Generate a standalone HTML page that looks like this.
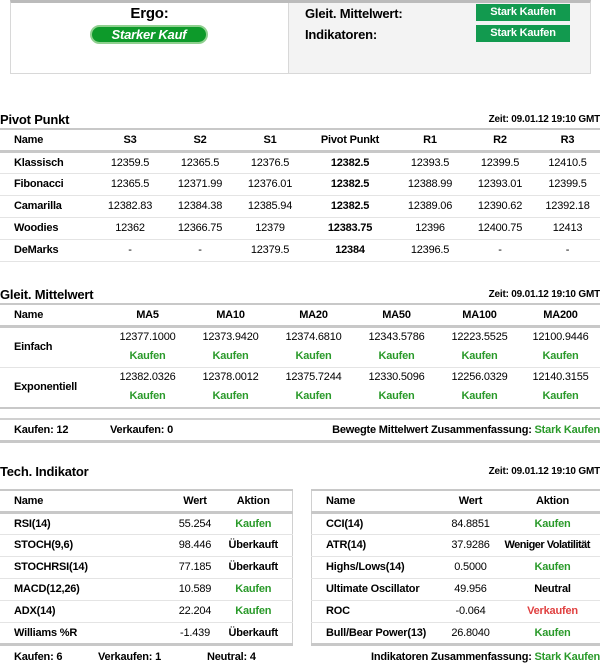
<!DOCTYPE html>
<html><head><meta charset="utf-8"><style>
*{margin:0;padding:0;box-sizing:border-box}
body{width:600px;height:666px;overflow:hidden;background:#fff;font-family:"Liberation Sans",Arial,sans-serif;font-size:11px;color:#000;position:relative;letter-spacing:-0.2px}
.abs{position:absolute}
.top{left:10px;top:0;width:581px;height:74px;border:1px solid #d8d8d8;border-top:3px solid #bbb;background:#fff}
.topr{position:absolute;left:277px;top:0;right:0;bottom:0;background:#f3f3f3;border-left:1px solid #d8d8d8}
.btn{position:absolute;background:#129a4f;color:#fff;font-weight:bold;font-size:11px;text-align:center;width:94px;height:17px;line-height:17px}
.pill{position:absolute;width:118px;height:19px;border-radius:10px;background:#0d9a2a;border:2px solid #8fd08f;color:#fff;font-style:italic;font-weight:bold;font-size:13px;text-align:center;line-height:15px}
.title{position:absolute;left:0;font-weight:bold;font-size:13px}
.time{position:absolute;right:0;font-weight:bold;font-size:10px}
table{position:absolute;border-collapse:collapse;table-layout:fixed}
td{height:22px;text-align:center;border-bottom:1px solid #e4e4e4;white-space:nowrap}
tr.h td{font-weight:bold;border-top:2px solid #c8c8c8;border-bottom:3px solid #c8c8c8}
td.n{text-align:left;padding-left:14px;font-weight:bold}
.g{color:#2a9a2a;font-weight:bold}
.r{color:#e04040;font-weight:bold}
b{font-weight:bold}
.ma td{line-height:19px}
</style></head><body>
<div class="abs top">
 <div class="abs" style="left:0;width:277px;top:2px;text-align:center;font-weight:bold;font-size:15px">Ergo:</div>
 <div class="pill" style="left:79px;top:22px">Starker Kauf</div>
 <div class="topr">
  <div class="abs" style="left:16px;top:3px;font-weight:bold;font-size:13px">Gleit. Mittelwert:</div>
  <div class="abs" style="left:16px;top:24px;font-weight:bold;font-size:13px">Indikatoren:</div>
  <div class="btn" style="left:187px;top:1px">Stark Kaufen</div>
  <div class="btn" style="left:187px;top:22px">Stark Kaufen</div>
 </div>
</div>

<div class="title" style="top:112px">Pivot Punkt</div>
<div class="time" style="top:114px">Zeit: 09.01.12 19:10 GMT</div>
<table style="left:0;top:128px;width:600px">
<col style="width:95px"><col style="width:70px"><col style="width:70px"><col style="width:70px"><col style="width:90px"><col style="width:70px"><col style="width:70px"><col style="width:65px">
<tr class="h"><td class="n">Name</td><td>S3</td><td>S2</td><td>S1</td><td>Pivot Punkt</td><td>R1</td><td>R2</td><td>R3</td></tr>
<tr><td class="n">Klassisch</td><td>12359.5</td><td>12365.5</td><td>12376.5</td><td><b>12382.5</b></td><td>12393.5</td><td>12399.5</td><td>12410.5</td></tr>
<tr><td class="n">Fibonacci</td><td>12365.5</td><td>12371.99</td><td>12376.01</td><td><b>12382.5</b></td><td>12388.99</td><td>12393.01</td><td>12399.5</td></tr>
<tr><td class="n">Camarilla</td><td>12382.83</td><td>12384.38</td><td>12385.94</td><td><b>12382.5</b></td><td>12389.06</td><td>12390.62</td><td>12392.18</td></tr>
<tr><td class="n">Woodies</td><td>12362</td><td>12366.75</td><td>12379</td><td><b>12383.75</b></td><td>12396</td><td>12400.75</td><td>12413</td></tr>
<tr><td class="n">DeMarks</td><td>-</td><td>-</td><td>12379.5</td><td><b>12384</b></td><td>12396.5</td><td>-</td><td>-</td></tr>
</table>

<div class="title" style="top:287px">Gleit. Mittelwert</div>
<div class="time" style="top:289px">Zeit: 09.01.12 19:10 GMT</div>
<table class="ma" style="left:0;top:303px;width:600px">
<col style="width:106px"><col style="width:83px"><col style="width:83px"><col style="width:83px"><col style="width:83px"><col style="width:83px"><col style="width:79px">
<tr class="h"><td class="n" style="line-height:normal">Name</td><td style="line-height:normal">MA5</td><td style="line-height:normal">MA10</td><td style="line-height:normal">MA20</td><td style="line-height:normal">MA50</td><td style="line-height:normal">MA100</td><td style="line-height:normal">MA200</td></tr>
<tr><td class="n" style="height:41px">Einfach</td><td>12377.1000<br><span class="g">Kaufen</span></td><td>12373.9420<br><span class="g">Kaufen</span></td><td>12374.6810<br><span class="g">Kaufen</span></td><td>12343.5786<br><span class="g">Kaufen</span></td><td>12223.5525<br><span class="g">Kaufen</span></td><td>12100.9446<br><span class="g">Kaufen</span></td></tr>
<tr style="border-bottom:2px solid #c8c8c8"><td class="n" style="height:41px">Exponentiell</td><td>12382.0326<br><span class="g">Kaufen</span></td><td>12378.0012<br><span class="g">Kaufen</span></td><td>12375.7244<br><span class="g">Kaufen</span></td><td>12330.5096<br><span class="g">Kaufen</span></td><td>12256.0329<br><span class="g">Kaufen</span></td><td>12140.3155<br><span class="g">Kaufen</span></td></tr>
</table>
<div class="abs" style="left:0;top:418px;width:600px;height:25px;border-top:2px solid #d0d0d0;border-bottom:3px solid #c8c8c8;font-weight:bold;line-height:21px">
 <span class="abs" style="left:14px">Kaufen: 12</span>
 <span class="abs" style="left:110px">Verkaufen: 0</span>
 <span class="abs" style="right:0">Bewegte Mittelwert Zusammenfassung: <span class="g">Stark Kaufen</span></span>
</div>

<div class="title" style="top:464px">Tech. Indikator</div>
<div class="time" style="top:466px">Zeit: 09.01.12 19:10 GMT</div>
<table style="left:0;top:489px;width:292px;border-right:1px solid #d0d0d0">
<col style="width:135px"><col style="width:80px"><col style="width:77px">
<tr class="h"><td class="n">Name</td><td style="padding-left:40px">Wert</td><td>Aktion</td></tr>
<tr><td class="n">RSI(14)</td><td style="padding-left:40px">55.254</td><td class="g">Kaufen</td></tr>
<tr><td class="n">STOCH(9,6)</td><td style="padding-left:40px">98.446</td><td><b>Überkauft</b></td></tr>
<tr><td class="n">STOCHRSI(14)</td><td style="padding-left:40px">77.185</td><td><b>Überkauft</b></td></tr>
<tr><td class="n">MACD(12,26)</td><td style="padding-left:40px">10.589</td><td class="g">Kaufen</td></tr>
<tr><td class="n">ADX(14)</td><td style="padding-left:40px">22.204</td><td class="g">Kaufen</td></tr>
<tr style="border-bottom:3px solid #c8c8c8"><td class="n">Williams %R</td><td style="padding-left:40px">-1.439</td><td><b>Überkauft</b></td></tr>
</table>
<table style="left:311px;top:489px;width:289px;border-left:1px solid #d0d0d0">
<col style="width:125px"><col style="width:68px"><col style="width:96px">
<tr class="h"><td class="n">Name</td><td>Wert</td><td>Aktion</td></tr>
<tr><td class="n">CCI(14)</td><td>84.8851</td><td class="g">Kaufen</td></tr>
<tr><td class="n">ATR(14)</td><td>37.9286</td><td style="letter-spacing:-0.5px;text-align:left"><b>Weniger Volatilität</b></td></tr>
<tr><td class="n">Highs/Lows(14)</td><td>0.5000</td><td class="g">Kaufen</td></tr>
<tr><td class="n">Ultimate Oscillator</td><td>49.956</td><td><b>Neutral</b></td></tr>
<tr><td class="n">ROC</td><td>-0.064</td><td class="r">Verkaufen</td></tr>
<tr style="border-bottom:3px solid #c8c8c8"><td class="n">Bull/Bear Power(13)</td><td>26.8040</td><td class="g">Kaufen</td></tr>
</table>
<div class="abs" style="left:0;top:651px;width:600px;font-weight:bold">
 <span class="abs" style="left:14px">Kaufen: 6</span>
 <span class="abs" style="left:98px">Verkaufen: 1</span>
 <span class="abs" style="left:207px">Neutral: 4</span>
 <span class="abs" style="right:0">Indikatoren Zusammenfassung: <span class="g">Stark Kaufen</span></span>
</div>
</body></html>
